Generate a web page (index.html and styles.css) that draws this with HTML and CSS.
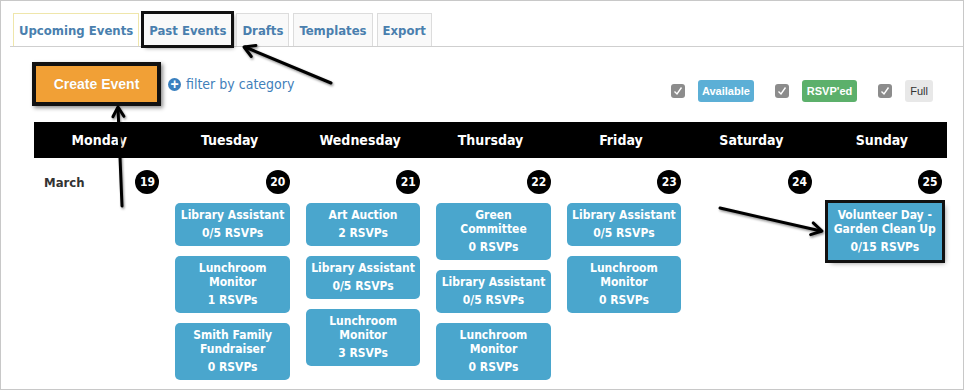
FILE: index.html
```html
<!DOCTYPE html>
<html lang="en">
<head>
    <meta charset="UTF-8">
    <meta name="viewport" content="width=device-width, initial-scale=1.0">
    <title>Events Calendar</title>
    <link rel="stylesheet" href="styles.css">
</head>
<body>
<div class="page">
    <ul class="tabs">
        <li class="tab active">Upcoming Events</li>
        <li class="tab marked">Past Events</li>
        <li class="tab">Drafts</li>
        <li class="tab">Templates</li>
        <li class="tab">Export</li>
    </ul>

    <div class="toolbar">
        <button class="create-btn">Create Event</button>
        <a class="filter" href="#"><span class="plus">+</span>filter by category</a>
        <div class="legend">
            <span class="check"><svg width="14" height="14" viewBox="0 0 14 14"><polyline points="3.5,7.5 6,10 10.5,3.5" fill="none" stroke="#fff" stroke-width="1.4"/></svg></span>
            <span class="badge available">Available</span>
            <span class="check"><svg width="14" height="14" viewBox="0 0 14 14"><polyline points="3.5,7.5 6,10 10.5,3.5" fill="none" stroke="#fff" stroke-width="1.4"/></svg></span>
            <span class="badge rsvped">RSVP'ed</span>
            <span class="check"><svg width="14" height="14" viewBox="0 0 14 14"><polyline points="3.5,7.5 6,10 10.5,3.5" fill="none" stroke="#fff" stroke-width="1.4"/></svg></span>
            <span class="badge full">Full</span>
        </div>
    </div>

    <div class="calendar">
        <div class="cal-head">
            <div>Monday</div>
            <div>Tuesday</div>
            <div>Wednesday</div>
            <div>Thursday</div>
            <div>Friday</div>
            <div>Saturday</div>
            <div>Sunday</div>
        </div>
        <div class="cal-body">
            <div class="day">
                <div class="date-row"><span class="month">March</span><span class="num">19</span></div>
            </div>
            <div class="day">
                <div class="date-row"><span class="num">20</span></div>
                <div class="events">
                    <div class="event"><div class="title">Library Assistant</div><div class="count">0/5 RSVPs</div></div>
                    <div class="event"><div class="title">Lunchroom Monitor</div><div class="count">1 RSVPs</div></div>
                    <div class="event"><div class="title">Smith Family Fundraiser</div><div class="count">0 RSVPs</div></div>
                </div>
            </div>
            <div class="day">
                <div class="date-row"><span class="num">21</span></div>
                <div class="events">
                    <div class="event"><div class="title">Art Auction</div><div class="count">2 RSVPs</div></div>
                    <div class="event"><div class="title">Library Assistant</div><div class="count">0/5 RSVPs</div></div>
                    <div class="event"><div class="title">Lunchroom Monitor</div><div class="count">3 RSVPs</div></div>
                </div>
            </div>
            <div class="day">
                <div class="date-row"><span class="num">22</span></div>
                <div class="events">
                    <div class="event"><div class="title">Green Committee</div><div class="count">0 RSVPs</div></div>
                    <div class="event"><div class="title">Library Assistant</div><div class="count">0/5 RSVPs</div></div>
                    <div class="event"><div class="title">Lunchroom Monitor</div><div class="count">0 RSVPs</div></div>
                </div>
            </div>
            <div class="day">
                <div class="date-row"><span class="num">23</span></div>
                <div class="events">
                    <div class="event"><div class="title">Library Assistant</div><div class="count">0/5 RSVPs</div></div>
                    <div class="event"><div class="title">Lunchroom Monitor</div><div class="count">0 RSVPs</div></div>
                </div>
            </div>
            <div class="day">
                <div class="date-row"><span class="num">24</span></div>
            </div>
            <div class="day">
                <div class="date-row"><span class="num">25</span></div>
                <div class="events">
                    <div class="event marked"><div class="title">Volunteer Day - Garden Clean Up</div><div class="count">0/15 RSVPs</div></div>
                </div>
            </div>
        </div>
    </div>

    <!-- callout arrows drawn over the page -->
    <svg class="arrows" width="964" height="390" viewBox="0 0 964 390">
        <defs>
            <filter id="shade" x="-20%" y="-20%" width="140%" height="140%">
                <feDropShadow dx="1" dy="1.5" stdDeviation="1.2" flood-opacity="0.45"/>
            </filter>
        </defs>
        <g fill="none" stroke="#000" stroke-width="3" stroke-linecap="round" stroke-linejoin="round" filter="url(#shade)">
            <line x1="331" y1="83" x2="245" y2="47"/>
            <polyline points="251.3,56.5 244,47 255.9,45.4"/>
            <line x1="122" y1="206" x2="118" y2="108"/>
            <polyline points="112.9,116.7 118,107 123.9,116.3"/>
            <line x1="720" y1="208" x2="821" y2="231"/>
            <polyline points="813.2,222.9 822,231 810.6,234.6"/>
        </g>
    </svg>
</div>
</body>
</html>
```

FILE: styles.css
```css
body {
    margin: 0;
    background: #fff;
    font-family: "DejaVu Sans Condensed", "DejaVu Sans", sans-serif;
}

.page {
    position: relative;
    height: 388px;
    border: 1px solid #c8c8c8;
    overflow: hidden;
}

/* tabs */
.tabs {
    display: flex;
    gap: 4px;
    margin: 0 0 0 9px;
    padding: 12px 0 0 3px;
    list-style: none;
    border-bottom: 1px solid #cfcfcf;
}
.tab {
    box-sizing: border-box;
    height: 33px;
    padding: 0 5px;
    line-height: 33px;
    font-size: 13px;
    font-weight: bold;
    color: #4a7fae;
    background: #f9f9f9;
    border: 1px solid #dcdcdc;
    border-bottom: none;
}
.tab.active {
    background: #fff;
    border-color: #efe6ab;
}
.tab.marked {
    outline: 3px solid #111;
    outline-offset: -1px;
    box-shadow: 2px 2px 4px rgba(0,0,0,.45);
}

/* toolbar */
.toolbar {
    display: flex;
    align-items: center;
    padding: 15px 30px 0 31px;
}
.create-btn {
    width: 129px;
    height: 44px;
    border: 4px solid #111;
    background: #f1a036;
    color: #fff;
    font-family: "Liberation Sans", Arial, sans-serif;
    font-size: 14px;
    font-weight: bold;
    text-shadow: 0 0 1px rgba(0,0,0,.15);
    box-shadow: 2px 2px 4px rgba(0,0,0,.45);
    cursor: pointer;
}
.filter {
    display: flex;
    align-items: center;
    margin-left: 7px;
    font-size: 14px;
    color: #3f80ba;
    text-decoration: none;
}
.plus {
    width: 13px;
    height: 13px;
    margin-right: 5px;
    border-radius: 50%;
    background: #3a80bf;
    color: #fff;
    font-family: "Liberation Sans", Arial, sans-serif;
    font-size: 14px;
    font-weight: bold;
    line-height: 13px;
    text-align: center;
}

.legend {
    display: flex;
    align-items: center;
    align-self: flex-start;
    margin: 18px 0 0 auto;
}
.check {
    width: 14px;
    height: 14px;
    border-radius: 3px;
    background: #8c8c8c;
}
.check svg { display: block; }
.badge {
    height: 22px;
    margin: 0 21px 0 13px;
    padding: 0 4px;
    border-radius: 3px;
    font-family: "Liberation Sans", Arial, sans-serif;
    font-size: 11px;
    font-weight: bold;
    line-height: 22px;
    color: #fff;
}
.badge.available { background: #5cafd6; }
.badge.rsvped { background: #5cb06b; padding: 0 5px; }
.badge.full {
    margin-right: 0;
    padding: 0 5px;
    background: #e8e8e8;
    color: #333;
    font-weight: normal;
}

/* calendar */
.calendar {
    margin: 16px 16px 0 33px;
}
.cal-head {
    display: grid;
    grid-template-columns: repeat(7, 1fr);
    height: 36px;
    background: #000;
    color: #fff;
    font-size: 14px;
    font-weight: bold;
    line-height: 36px;
    text-align: center;
}
.cal-body {
    display: grid;
    grid-template-columns: repeat(7, 1fr);
}
.date-row {
    display: flex;
    align-items: center;
    justify-content: flex-end;
    padding: 12px 5px 0 10px;
}
.month {
    margin-right: auto;
    font-size: 13px;
    font-weight: bold;
    color: #333;
}
.num {
    width: 24px;
    height: 24px;
    border-radius: 50%;
    background: #000;
    color: #fff;
    font-size: 12px;
    font-weight: bold;
    line-height: 24px;
    text-align: center;
}
.events {
    display: flex;
    flex-direction: column;
    gap: 10px;
    margin-top: 9px;
    padding: 0 5px 0 11px;
}
.event {
    padding: 5px 4px;
    border-radius: 5px;
    background: #4aa6cd;
    color: #fff;
    font-size: 12px;
    font-weight: bold;
    text-align: center;
}
.event .title { line-height: 14px; }
.event .count { margin-top: 3px; line-height: 16px; }
.event.marked {
    border-radius: 0;
    box-shadow: 0 0 0 3px #111, 3px 3px 5px rgba(0,0,0,.45);
}

.arrows {
    position: absolute;
    top: -1px;
    left: -1px;
    pointer-events: none;
}
```
